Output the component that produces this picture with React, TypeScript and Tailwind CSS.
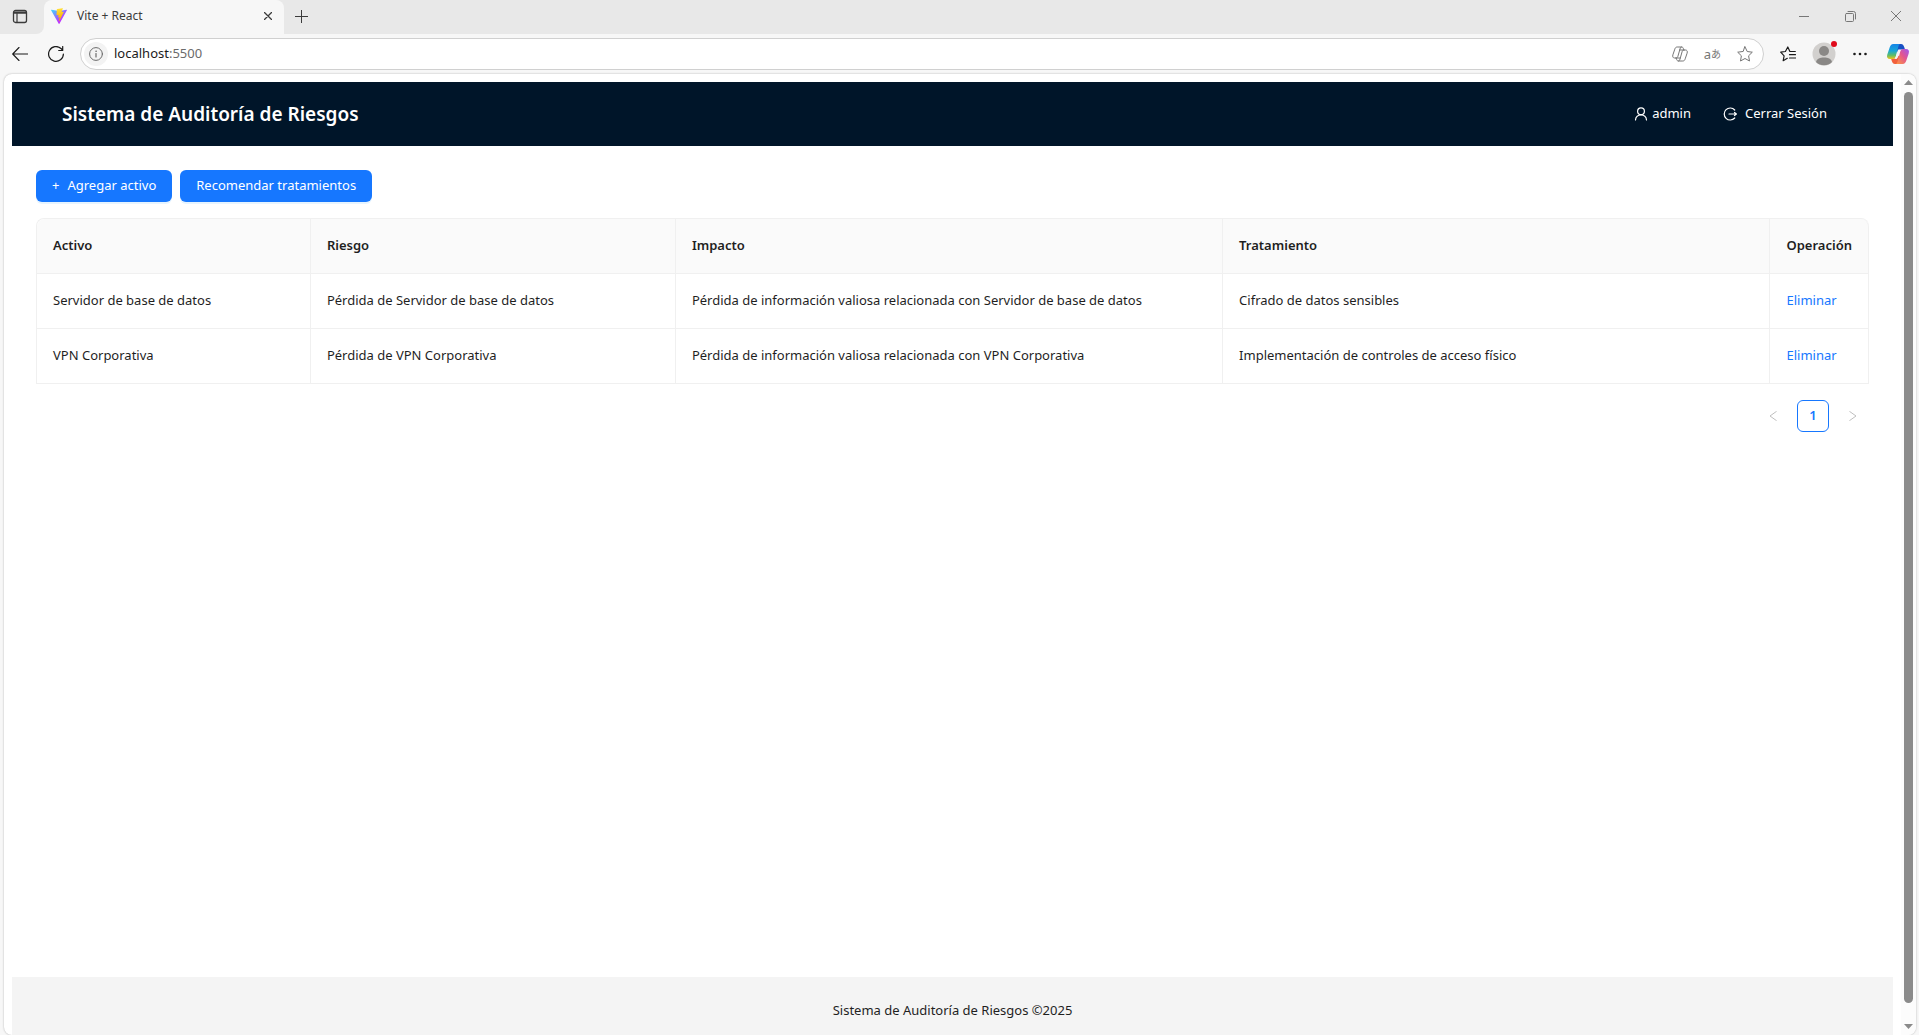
import React from "react";

const rows = [
  {
    activo: "Servidor de base de datos",
    riesgo: "Pérdida de Servidor de base de datos",
    impacto: "Pérdida de información valiosa relacionada con Servidor de base de datos",
    tratamiento: "Cifrado de datos sensibles",
  },
  {
    activo: "VPN Corporativa",
    riesgo: "Pérdida de VPN Corporativa",
    impacto: "Pérdida de información valiosa relacionada con VPN Corporativa",
    tratamiento: "Implementación de controles de acceso físico",
  },
];

const stroke = {
  fill: "none",
  stroke: "currentColor",
  strokeLinecap: "round" as const,
  strokeLinejoin: "round" as const,
};

function ViteLogo() {
  return (
    <svg className="size-4 shrink-0" viewBox="0 0 256 257" aria-hidden="true">
      <defs>
        <linearGradient id="viteA" x1="-.8%" x2="57.6%" y1="7.7%" y2="78.4%">
          <stop offset="0%" stopColor="#41D1FF" />
          <stop offset="100%" stopColor="#BD34FE" />
        </linearGradient>
        <linearGradient id="viteB" x1="43.4%" x2="50.3%" y1="2.2%" y2="89%">
          <stop offset="0%" stopColor="#FFEA83" />
          <stop offset="8.3%" stopColor="#FFDD35" />
          <stop offset="100%" stopColor="#FFA800" />
        </linearGradient>
      </defs>
      <path
        fill="url(#viteA)"
        d="M255.153 37.938 134.897 252.976c-2.483 4.44-8.862 4.466-11.382.048L.875 37.958c-2.746-4.814 1.371-10.646 6.827-9.67l120.385 21.517a6.537 6.537 0 0 0 2.322-.004l117.867-21.483c5.438-.991 9.574 4.796 6.877 9.62Z"
      />
      <path
        fill="url(#viteB)"
        d="M185.432.063 96.44 17.501a3.268 3.268 0 0 0-2.634 3.014l-5.474 92.456a3.268 3.268 0 0 0 3.997 3.378l24.777-5.718c2.318-.535 4.413 1.507 3.936 3.838l-7.361 36.047c-.495 2.426 1.782 4.5 4.151 3.78l15.304-4.649c2.372-.72 4.652 1.36 4.15 3.788l-11.698 56.621c-.732 3.542 3.979 5.473 5.943 2.437l1.313-2.028 72.516-144.72c1.215-2.423-.88-5.186-3.54-4.672l-25.505 4.922c-2.396.462-4.435-1.77-3.759-4.114l16.646-57.705c.677-2.35-1.37-4.583-3.769-4.113Z"
      />
    </svg>
  );
}

function CopilotOutline() {
  return (
    <svg className="size-4" viewBox="0 0 16 16" aria-hidden="true" {...stroke}>
      <path d="M9.500 1H5.200C3.800 1 3.200 1.900 2.800 3.200L.9 8.800C.3 10.800 1 12 2.600 12H4c1 0 1.600-.7 1.900-1.700L8 3c.4-1.400.8-2 1.700-2s1.400.7 1.700 1.600L11.900 4" />
      <path d="M6.500 15h4.300c1.400 0 2-.9 2.400-2.200l1.900-5.600C15.700 5.200 15 4 13.400 4H12c-1 0-1.600.7-1.900 1.700L8 13c-.4 1.400-.8 2-1.700 2s-1.400-.7-1.700-1.600L4.100 12M7.500 4H12M4 12h4.300" />
    </svg>
  );
}

function CopilotColor() {
  return (
    <svg className="h-5 w-6" viewBox="0 0 24 20" aria-hidden="true">
      <defs>
        <linearGradient id="cpA" x1="0" y1="0" x2="0" y2="1">
          <stop offset="0" stopColor="#1684e8" />
          <stop offset=".45" stopColor="#18a7d8" />
          <stop offset=".75" stopColor="#5dbd6a" />
          <stop offset="1" stopColor="#f0c419" />
        </linearGradient>
        <linearGradient id="cpB" x1="1" y1="0" x2="0" y2="1">
          <stop offset="0" stopColor="#9b59f5" />
          <stop offset=".45" stopColor="#e3558f" />
          <stop offset="1" stopColor="#ff9a3d" />
        </linearGradient>
      </defs>
      <path fill="#1750c4" d="M12 0h3c2 0 2.700 1.500 3.200 3l.8 2.500h-4c-2 0-3 1-3.600 3L9 5Z" />
      <path fill="#f2603c" d="M12 20H9c-2 0-2.700-1.500-3.200-3L5 14.500h4c2 0 3-1 3.600-3L15 15Z" />
      <path fill="url(#cpA)" d="M14 0H7.500C5 0 4.200 1.800 3.500 4L1.300 10.500C.4 13.300 1.500 15 4 15h2.500c2 0 2.800-1.200 3.400-3L12 4c.6-2.500 1-3.500 2-4Z" />
      <path fill="url(#cpB)" d="M10 20h6.500c2.500 0 3.300-1.800 4-4l2.200-6.500C23.600 6.700 22.500 5 20 5h-2.500c-2 0-2.800 1.200-3.400 3L12 16c-.6 2.500-1 3.500-2 4Z" />
      <path fill="#f4f2f6" d="M12.300 5.500h2.200c-.7.700-1 1.500-1.300 2.500l-1.500 5c-.3 1-.7 1.500-1.200 2H8.800c.6-.7 1-1.700 1.300-2.700l1.300-4.500c.2-.9.400-1.600.9-2.300Z" />
    </svg>
  );
}

function TabStrip() {
  return (
    <div className="flex h-[34px] items-stretch bg-[#f7f7f7] text-[#3b3b3b]">
      <button aria-label="Menú de pestañas" className="flex w-11 items-center rounded-br-lg bg-[#e8e8e8] pl-3">
        <svg className="size-4" viewBox="0 0 16 16" aria-hidden="true" {...stroke}>
          <rect x="1.500" y="1.500" width="13" height="12" rx="2" strokeWidth="1.300" />
          <path d="M2 3h12M2 4.200h12M5 5v8" strokeWidth="1.200" />
        </svg>
      </button>
      <div className="flex grow bg-[#e8e8e8]">
        <div className="flex w-60 items-center gap-[10px] rounded-t-lg bg-[#f7f7f7] pr-2 pb-[2px] pl-[7px]">
          <ViteLogo />
          <span className="grow text-[12px]">Vite + React</span>
          <button aria-label="Cerrar pestaña" className="flex size-4 items-center justify-center">
            <svg className="size-2" viewBox="0 0 8 8" aria-hidden="true" {...stroke}>
              <path d="M0 0l8 8M8 0L0 8" strokeWidth="1.300" />
            </svg>
          </button>
        </div>
        <div className="flex grow rounded-bl-lg bg-[#e8e8e8] pb-[2px]">
          <button aria-label="Nueva pestaña" className="flex w-[35px] items-center justify-center">
            <svg className="size-[13px]" viewBox="0 0 13 13" aria-hidden="true" {...stroke}>
              <path d="M6.500 0v13M0 6.500h13" />
            </svg>
          </button>
          <div className="ml-auto flex text-[#777]">
            <button aria-label="Minimizar" className="flex w-[46px] items-center justify-center">
              <svg className="size-[10px]" viewBox="0 0 10 10" aria-hidden="true" {...stroke}>
                <path d="M0 5.500h10" />
              </svg>
            </button>
            <button aria-label="Restaurar" className="flex w-[46px] items-center justify-center">
              <svg className="size-[11px]" viewBox="0 0 11 11" aria-hidden="true" {...stroke}>
                <rect x=".5" y="2.500" width="8" height="8" rx="1" />
                <path d="M3 .5h5.500a2 2 0 0 1 2 2V8" />
              </svg>
            </button>
            <button aria-label="Cerrar" className="flex w-[46px] items-center justify-center">
              <svg className="size-[10px]" viewBox="0 0 10 10" aria-hidden="true" {...stroke}>
                <path d="M0 0l10 10M10 0L0 10" />
              </svg>
            </button>
          </div>
        </div>
      </div>
    </div>
  );
}

const starPath =
  "M8 .8l2.200 4.700 5.100.7-3.700 3.600.9 5.200L8 12.500 3.500 15l.9-5.200L.7 6.200l5.100-.7z";

function Toolbar() {
  return (
    <div className="flex h-10 items-center bg-[#f7f7f7] text-[#1b1b1b]">
      <button aria-label="Atrás" className="ml-3 flex size-4 items-center justify-center">
        <svg className="size-4" viewBox="0 0 16 16" aria-hidden="true" {...stroke}>
          <path d="M7 1.500L.7 8 7 14.500M.7 8h15" strokeWidth="1.100" />
        </svg>
      </button>
      <button aria-label="Actualizar" className="ml-5 flex size-4 items-center justify-center">
        <svg className="size-4" viewBox="0 0 16 16" aria-hidden="true" {...stroke}>
          <path d="M15.400 8A7.400 7.400 0 1 1 13 2.500L14.500 4M14.700.5V4.500H10.700" strokeWidth="1.200" />
        </svg>
      </button>
      <div className="ml-4 flex h-8 grow items-center rounded-full border border-[#d0d0d0] bg-white pr-[10px] pl-[3px]">
        <button
          aria-label="Información del sitio"
          className="flex size-6 shrink-0 items-center justify-center rounded-full bg-[#f3f3f3] text-[#6b6b6b]"
        >
          <svg className="size-[14px]" viewBox="0 0 14 14" aria-hidden="true" {...stroke}>
            <circle cx="7" cy="7" r="6.400" />
            <path d="M7 6.500v3.500" strokeWidth="1.200" />
            <circle cx="7" cy="4.200" r=".4" fill="currentColor" strokeWidth=".6" />
          </svg>
        </button>
        <a href="#" className="ml-[6px] grow text-[13px]">
          localhost<span className="text-[#6b6b6b]">:5500</span>
        </a>
        <div className="flex items-center gap-4 text-[#767676]">
          <button aria-label="Copilot en la página">
            <CopilotOutline />
          </button>
          <button aria-label="Traducir" className="flex items-center">
            <span className="text-[13px] leading-4">a</span>
            <span className="font-['Noto_Sans_CJK_JP',sans-serif] text-[10px] leading-4">あ</span>
          </button>
          <button aria-label="Agregar a favoritos">
            <svg className="size-4" viewBox="0 0 16 16" aria-hidden="true" {...stroke}>
              <path d={starPath} />
            </svg>
          </button>
        </div>
      </div>
      <button aria-label="Favoritos" className="ml-4 flex">
        <svg className="size-4" viewBox="0 0 16 16" aria-hidden="true" {...stroke} strokeWidth="1.200">
          <path d="M7.300 12.300L3.200 14.700l.9-4.900L.7 6.200l4.700-.7L7.800 1l2.100 4.500h5.400M9.500 8.700h6M9.500 12h6" />
        </svg>
      </button>
      <button aria-label="Perfil" className="relative ml-4 flex">
        <svg className="size-6" viewBox="0 0 24 24" aria-hidden="true">
          <circle cx="12" cy="12" r="11.500" fill="#d2d0ce" />
          <circle cx="12" cy="9" r="5" fill="#8a8886" />
          <path d="M4 20c1-3.500 4-4.500 8-4.500s7 1 8 4.500a11.500 11.500 0 0 1-16 0Z" fill="#8a8886" />
        </svg>
        <span className="absolute -top-px -right-px size-[6px] rounded-full bg-[#e00b1c]" />
      </button>
      <button aria-label="Configuración y más" className="ml-4 flex">
        <svg className="size-4" viewBox="0 0 16 16" fill="currentColor" aria-hidden="true">
          <circle cx="2.500" cy="8" r="1.300" />
          <circle cx="8" cy="8" r="1.300" />
          <circle cx="13.500" cy="8" r="1.300" />
        </svg>
      </button>
      <button aria-label="Copilot" className="mr-[9px] ml-[18px] flex">
        <CopilotColor />
      </button>
    </div>
  );
}

function AppHeader() {
  return (
    <header className="flex h-16 shrink-0 items-center bg-[#001529] px-[50px] text-white">
      <h1 className="grow text-[19px] font-semibold">Sistema de Auditoría de Riesgos</h1>
      <button className="flex items-center gap-1 px-4 text-[13px]">
        <svg className="size-[14px]" viewBox="0 0 14 14" aria-hidden="true" {...stroke} strokeWidth="1.200">
          <circle cx="7" cy="4.300" r="3.400" />
          <path d="M1.500 13c.2-3 2.500-5.200 5.500-5.200S12.300 10 12.500 13" />
        </svg>
        admin
      </button>
      <button className="flex items-center gap-2 px-4 text-[13px]">
        <svg className="size-[14px]" viewBox="0 0 14 14" aria-hidden="true" {...stroke} strokeWidth="1.200">
          <path d="M11.700 3A6 6 0 1 0 11.700 11M6 7h7M11.500 5.500L13.400 7l-1.900 1.500" />
        </svg>
        Cerrar Sesión
      </button>
    </header>
  );
}

function RiskTable() {
  const th = "border-r border-b border-[#f0f0f0] px-4 text-left font-semibold";
  const td = "border-r border-b border-[#f0f0f0] px-4";
  return (
    <table className="mt-4 w-full border-separate border-spacing-0 rounded-t-lg border-t border-l border-[#f0f0f0] text-[13px]">
      <colgroup>
        <col className="w-[15%]" />
        <col className="w-[20%]" />
        <col className="w-[30%]" />
        <col className="w-[30%]" />
        <col className="w-[5%]" />
      </colgroup>
      <thead>
        <tr className="h-[55px]">
          <th className={`${th} rounded-tl-lg bg-[#fafafa]`}>Activo</th>
          <th className={`${th} bg-[#fafafa]`}>Riesgo</th>
          <th className={`${th} bg-[#fafafa]`}>Impacto</th>
          <th className={`${th} bg-[#fafafa]`}>Tratamiento</th>
          <th className={`${th} rounded-tr-lg bg-[#fafafa]`}>Operación</th>
        </tr>
      </thead>
      <tbody>
        {rows.map((r) => (
          <tr key={r.activo} className="h-[55px]">
            <td className={td}>{r.activo}</td>
            <td className={td}>{r.riesgo}</td>
            <td className={td}>{r.impacto}</td>
            <td className={td}>{r.tratamiento}</td>
            <td className={td}>
              <a href="#" className="text-[#1677ff]">
                Eliminar
              </a>
            </td>
          </tr>
        ))}
      </tbody>
    </table>
  );
}

function Pagination() {
  return (
    <nav aria-label="Paginación" className="mt-4 flex justify-end gap-2 text-[#bfbfbf]">
      <button aria-label="Página anterior" disabled className="flex size-8 items-center justify-center">
        <svg className="h-[10px] w-2" viewBox="0 0 8 10" aria-hidden="true" {...stroke}>
          <path d="M7.300.5L1 5l6.300 4.500" />
        </svg>
      </button>
      <button
        aria-current="page"
        className="size-8 rounded-md border border-[#1677ff] bg-white text-[13px] font-semibold text-[#1677ff]"
      >
        1
      </button>
      <button aria-label="Página siguiente" disabled className="flex size-8 items-center justify-center">
        <svg className="h-[10px] w-2" viewBox="0 0 8 10" aria-hidden="true" {...stroke}>
          <path d="M.7.5L7 5 .7 9.500" />
        </svg>
      </button>
    </nav>
  );
}

function Scrollbar() {
  return (
    <div aria-hidden="true" className="flex w-[15px] shrink-0 flex-col items-center bg-[#fcfcfc] pt-[6px] pb-[6px]">
      <svg className="h-[5px] w-[9px]" viewBox="0 0 9 5">
        <path d="M4.500 0L9 5H0z" fill="#8a8a8a" />
      </svg>
      <div className="mt-[7px] mb-[21px] w-[9px] grow rounded-full bg-[#8b8b8b]" />
      <svg className="h-[5px] w-[9px]" viewBox="0 0 9 5">
        <path d="M0 0h9L4.500 5z" fill="#8a8a8a" />
      </svg>
    </div>
  );
}

export default function App() {
  const primary =
    "flex h-8 items-center gap-2 rounded-md bg-[#1677ff] px-4 text-[13px] text-white shadow-[0_2px_0_rgba(5,145,255,0.1)]";
  return (
    <div className="flex h-screen flex-col overflow-hidden bg-[#f7f7f7] font-['Noto_Sans',sans-serif] text-[#1f1f1f]">
      <TabStrip />
      <Toolbar />
      <div className="mr-[3px] ml-1 flex min-h-0 grow overflow-hidden rounded-lg bg-white shadow-[0_0_2px_rgba(0,0,0,0.3)]">
        <div className="flex min-w-0 grow flex-col p-2 pb-0">
          <AppHeader />
          <main className="grow px-6 pt-6">
            <div className="flex gap-2">
              <button className={primary}>
                <span>+</span>
                <span>Agregar activo</span>
              </button>
              <button className={primary}>Recomendar tratamientos</button>
            </div>
            <RiskTable />
            <Pagination />
          </main>
          <footer className="h-[58px] bg-[#f4f4f4] pt-6 text-center text-[13px]">
            Sistema de Auditoría de Riesgos ©2025
          </footer>
        </div>
        <Scrollbar />
      </div>
    </div>
  );
}
